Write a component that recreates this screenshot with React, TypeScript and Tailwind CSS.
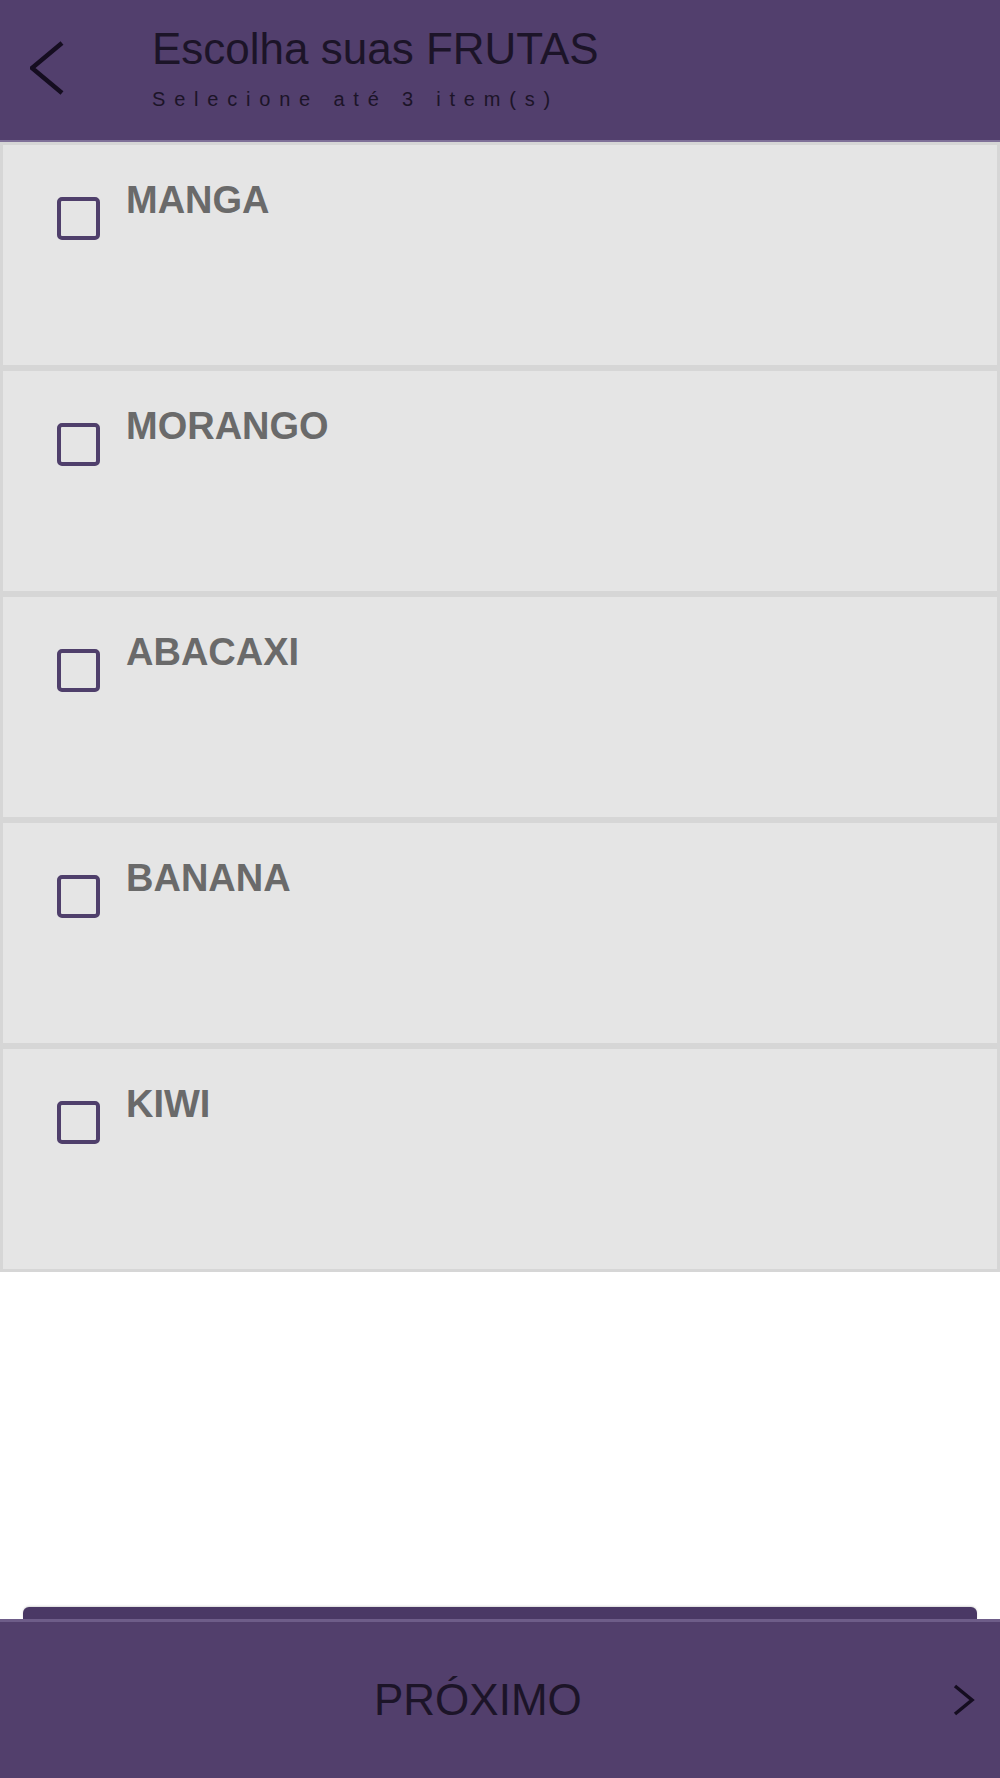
import React from 'react';

const frutas = ['MANGA', 'MORANGO', 'ABACAXI', 'BANANA', 'KIWI'];

const font = { fontFamily: '"Liberation Sans", Arial, sans-serif' };

const App: React.FC = () => {
  return (
    <div className="flex h-[1778px] w-[1000px] flex-col bg-white" style={font}>
      {/* Header */}
      <div className="flex h-[142px] shrink-0 border-b-2 border-[#7f7098] bg-[#523f6d]">
        <div className="ml-[30px] mt-[41px]">
          <svg width="34" height="54" viewBox="0 0 34 54" fill="none">
            <polyline points="32,2 2,27 32,52" stroke="#150d20" strokeWidth="4.5" />
          </svg>
        </div>
        <div className="ml-[88px] mt-[24px] flex flex-col">
          <span className="text-[44px] leading-[50px] text-[#1c1428]">Escolha suas FRUTAS</span>
          <span className="mt-[14px] text-[20px] leading-[23px] tracking-[8.8px] text-[#1c1428]">
            Selecione até 3 item(s)
          </span>
        </div>
      </div>

      {/* Lista */}
      <div className="flex flex-col">
        {frutas.map((fruta) => (
          <div
            key={fruta}
            className="flex h-[226px] items-start border-[3px] border-[#d6d6d6] bg-[#e5e5e5] pl-[54px]"
          >
            <div className="mt-[52px] h-[43px] w-[43px] rounded-[5px] border-4 border-[#4f3f6b]" />
            <span className="ml-[26px] mt-[33px] text-[38px] font-bold leading-[44px] text-[#6a6a6a]">
              {fruta}
            </span>
          </div>
        ))}
      </div>

      <div className="flex-1" />

      {/* Rodapé */}
      <div className="shrink-0">
        <div className="mx-[23px] h-[12px] rounded-t-[6px] bg-[#4a3865] shadow-[0_-1px_2px_rgba(0,0,0,0.15)]" />
        <div className="flex h-[159px] items-center border-t-[3px] border-[#6e5d89] bg-[#523f6c]">
          <span className="ml-[374px] text-[44px] leading-[50px] text-[#1c1428]">PRÓXIMO</span>
          <svg className="ml-auto mr-[25px]" width="22" height="32" viewBox="0 0 22 32" fill="none">
            <polyline points="2,2 19,16 2,30" stroke="#150d20" strokeWidth="3.5" />
          </svg>
        </div>
      </div>
    </div>
  );
};

export default App;
